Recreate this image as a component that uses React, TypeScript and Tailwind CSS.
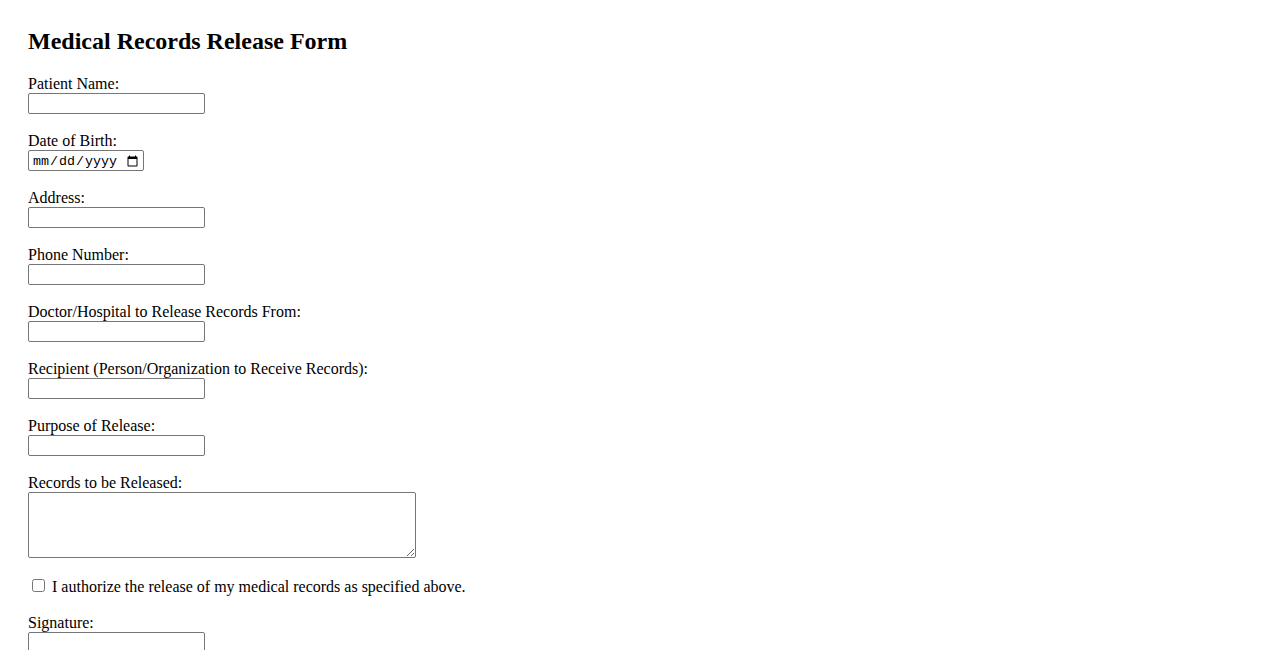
const fields = [
  { id: "patientName", label: "Patient Name:", type: "text" },
  { id: "dob", label: "Date of Birth:", type: "date" },
  { id: "address", label: "Address:", type: "text" },
  { id: "phone", label: "Phone Number:", type: "tel" },
  { id: "from", label: "Doctor/Hospital to Release Records From:", type: "text" },
  { id: "recipient", label: "Recipient (Person/Organization to Receive Records):", type: "text" },
  { id: "purpose", label: "Purpose of Release:", type: "text" },
]

const inputBase =
  "block h-[21px] border border-[#767676] rounded-[2px] bg-white px-[2px] text-[13.333px] outline-none"

export default function App() {
  return (
    <main
      className="min-h-screen bg-white pl-[28px] pt-[27px] text-black"
      style={{ fontFamily: '"Liberation Serif", "Times New Roman", serif' }}
    >
      <h2 className="mb-[20px] text-[24px] font-bold leading-[28px]">Medical Records Release Form</h2>
      <form>
        {fields.map((f) => (
          <div key={f.id} className="mb-[18px]">
            <label htmlFor={f.id} className="block text-[16px] leading-[18px]">
              {f.label}
            </label>
            {f.type === "date" ? (
              <input
                id={f.id}
                type="date"
                className={`${inputBase} w-[116px] pl-[3px] pt-[2px]`}
                style={{ fontFamily: '"Liberation Mono", monospace' }}
              />
            ) : (
              <input
                id={f.id}
                type={f.type}
                className={`${inputBase} w-[177px]`}
                style={{ fontFamily: '"Liberation Sans", Arial, sans-serif' }}
              />
            )}
          </div>
        ))}
        <div>
          <label htmlFor="records" className="block text-[16px] leading-[18px]">
            Records to be Released:
          </label>
          <textarea
            id="records"
            className="block h-[66px] w-[388px] rounded-[2px] border border-[#767676] bg-white text-[13.333px]"
            style={{ fontFamily: '"Liberation Mono", monospace' }}
          />
        </div>
        <div className="mt-[20px] flex h-[18px] items-start text-[16px] leading-[18px]">
          <input id="authorize" type="checkbox" className="ml-[4px] mr-[7px] mt-[1px] h-[13px] w-[13px]" />
          <label htmlFor="authorize">I authorize the release of my medical records as specified above.</label>
        </div>
        <div className="mt-[18px] mb-[18px]">
          <label htmlFor="signature" className="block text-[16px] leading-[18px]">
            Signature:
          </label>
          <input
            id="signature"
            type="text"
            className={`${inputBase} w-[177px]`}
            style={{ fontFamily: '"Liberation Sans", Arial, sans-serif' }}
          />
        </div>
      </form>
    </main>
  )
}
